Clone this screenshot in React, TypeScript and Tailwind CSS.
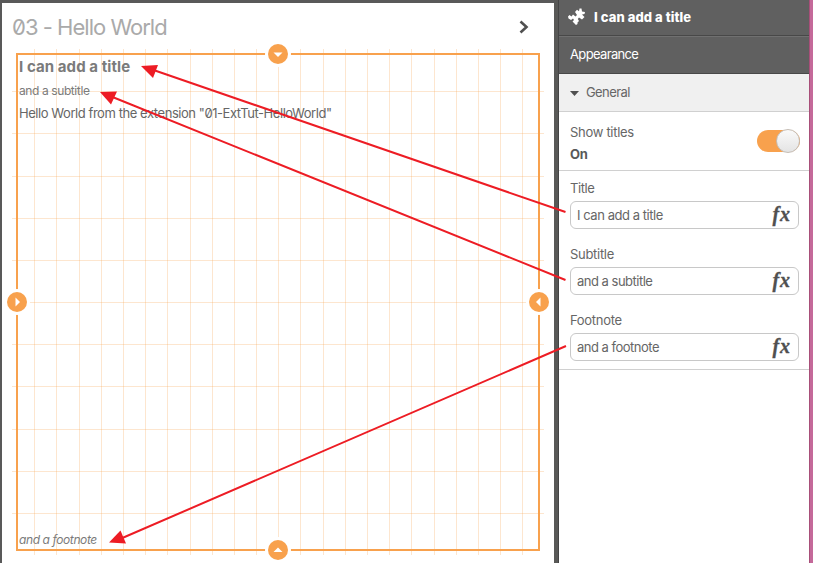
import React from 'react';

const columns = [34, 56, 79, 101, 123, 145, 167, 190, 212, 234, 256, 278, 300, 323, 345, 367, 389, 411, 434, 456, 478, 500, 522];
const rows = [91, 133, 176, 218, 260, 302, 344, 386, 429, 471, 513];

function Grid() {
  return (
    <svg className="absolute left-0 top-0" width="554" height="563" shapeRendering="crispEdges" fill="#f8a14d" fillOpacity="0.27">
      {columns.map((x) => <rect key={x} x={x} y="49" width="1" height="506" />)}
      {rows.map((y) => <rect key={y} x="12" y={y} width="532" height="1" />)}
    </svg>
  );
}

function Handle({ place, points }: { place: string; points: string }) {
  return (
    <svg className={'absolute ' + place} width="26" height="26" viewBox="0 0 26 26">
      <circle cx="13" cy="13" r="13" fill="#fff" />
      <circle cx="13" cy="13" r="10" fill="#f8a14d" />
      <polygon points={points} fill="#fff" />
    </svg>
  );
}

function Field({ label, value, labelTrack, valueTrack }: { label: string; value: string; labelTrack: string; valueTrack: string }) {
  return (
    <div className="h-[66px] px-[11px] pt-2">
      <div className={'h-[22px] text-[13px] leading-[18px] ' + labelTrack}>{label}</div>
      <div className="-mr-px flex h-7 items-center justify-between rounded-[6px] border border-[#c8c8c8] bg-white pl-1.5 pr-[7px]">
        <span className={'text-[13px] leading-[18px] ' + valueTrack}>{value}</span>
        <span className="pb-0.5 font-['Liberation_Serif',serif] text-[20px] font-bold italic leading-[20px] tracking-[0.9px] text-[#505050] [-webkit-text-stroke:0.3px_#505050]">fx</span>
      </div>
    </div>
  );
}

function Arrows() {
  return (
    <svg className="pointer-events-none absolute left-0 top-0" width="813" height="563" fill="#ed1c24" stroke="#ed1c24">
      <path d="M565.5 212 L152 69.5 M565.5 280 L110 96 M566 346 L120 539" fill="none" strokeWidth="2" />
      <g stroke="none">
        <polygon points="141,66 158,65 153,78" />
        <polygon points="100,92 117,91.5 111,104.5" />
        <polygon points="109,542.5 120.5,530.5 126,543.5" />
      </g>
    </svg>
  );
}

export default function App() {
  return (
    <div className="relative flex h-[563px] w-[813px] overflow-hidden bg-[#595959] font-['Inter','Open_Sans',sans-serif] text-[#666]">
      <main className="relative ml-0.5 mt-[3px] h-[560px] w-[552px] shrink-0 bg-white">
        <div className="absolute -left-0.5 -top-[3px]"><Grid /></div>
        <header className="flex h-[50px] items-center justify-between pl-[10px] pr-[25px]">
          <h1 className="-mt-0.5 whitespace-nowrap text-[22px] font-normal leading-[28px] tracking-[-0.98px] text-[#aaa] [font-feature-settings:'zero']">03 - Hello World</h1>
          <svg className="-mt-0.5" width="10" height="14" viewBox="0 0 10 14" fill="none" stroke="#505050" strokeWidth="2.6"><path d="M1.5 1.5 L7.5 7 L1.5 12.5" /></svg>
        </header>
        <section className="relative ml-[14px] flex h-[498px] w-[524px] flex-col border-2 border-[#f8a14d] pl-px">
          <h2 className="mt-0.5 h-[23px] whitespace-nowrap text-[15px] font-bold leading-[20px] tracking-[0.08px] text-[#7b7b7b]">I can add a title</h2>
          <div className="h-[22px] whitespace-nowrap text-[12px] leading-[22px] tracking-[-0.4px] text-[#7b7b7b]">and a subtitle</div>
          <div className="h-[23px] whitespace-nowrap text-[13px] leading-[23px] tracking-[-0.44px] [font-feature-settings:'zero']">Hello World from the extension "01-ExtTut-HelloWorld"</div>
          <div className="mb-px mt-auto whitespace-nowrap text-[12px] italic leading-[17px] tracking-[-0.4px] text-[#7b7b7b]">and a footnote</div>
          <Handle place="left-[247px] -top-[14px]" points="8.5,11.5 17.5,11.5 13,16" />
          <Handle place="left-[247px] -bottom-[14px]" points="8.5,15 17.5,15 13,10.5" />
          <Handle place="-left-[14px] top-[234px]" points="11.5,8.5 11.5,17.5 16,13" />
          <Handle place="-right-[14px] top-[234px]" points="14.5,8.5 14.5,17.5 10,13" />
        </section>
      </main>
      <div className="w-[5px] shrink-0 border-r border-[#454545] bg-[#595957]" />
      <aside className="w-[250px] shrink-0 bg-white">
        <div className="flex h-[36px] items-center border-b border-[#484848] bg-[#606060] pl-[9px] text-white">
          <svg width="18" height="18" viewBox="0 0 18 18" fill="#fff" className="-mt-0.5 mr-2">
            <path d="M0 8.5 L1.5 7 L3.5 8.5 L5 6.5 L7.5 8.5 L9 7 L7 4 L9 1.8 L11 3.2 L11.5 .5 L13.5 .5 L14 3.5 L17 4 L16.5 6 L14 6.5 L16.5 9 L14 11.5 L11 9.5 L9.8 11 L11 13 L9.5 14.5 L9.5 16 L8 17 L6.5 15.5 L4.5 13.5 L6 12 L5 10.5 L3 12 L.5 10.5 Z" />
          </svg>
          <span className="whitespace-nowrap pb-0.5 text-[13px] font-extrabold leading-[18px] tracking-[0.08px]">I can add a title</span>
        </div>
        <div className="flex h-[38px] items-center border-b border-t border-b-[#484848] border-t-[#707070] bg-[#606060] pl-[11px] text-[13px] tracking-[-0.65px] text-white">Appearance</div>
        <div className="flex h-[38px] items-center gap-[7px] border-b border-[#d0d0d0] bg-[#f0f0f0] pl-[11px] pt-px text-[13px] tracking-[-0.6px] text-[#666]">
          <svg width="9" height="5" viewBox="0 0 9 5"><path d="M0 0 H9 L4.5 5 Z" fill="#505050" /></svg>
          General
        </div>
        <div className="flex h-[59px] justify-between border-b border-[#d0d0d0] pl-[11px] pr-[9px] pt-[11px]">
          <div className="text-[13px] leading-[22px] tracking-[-0.3px]"><div className="-mt-0.5">Show titles</div><div className="font-bold text-[#595959]">On</div></div>
          <div className="mt-[7px] flex h-[22px] w-[43px] items-center justify-end rounded-full bg-[#f8a14d]">
            <div className="h-6 w-6 shrink-0 rounded-full border border-[#c5bdb5] bg-linear-to-b from-[#fafafa] to-[#e4e4e4]" />
          </div>
        </div>
        <div className="h-[199px] border-b border-[#d0d0d0]">
          <Field label="Title" value="I can add a title" labelTrack="tracking-[-0.4px]" valueTrack="tracking-[-0.45px]" />
          <Field label="Subtitle" value="and a subtitle" labelTrack="tracking-[-0.3px]" valueTrack="tracking-[-0.5px]" />
          <Field label="Footnote" value="and a footnote" labelTrack="tracking-[-0.3px]" valueTrack="tracking-[-0.5px]" />
        </div>
      </aside>
      <div className="flex-1 border-l border-[#a84f79] bg-[#c4699a]" />
      <Arrows />
    </div>
  );
}
